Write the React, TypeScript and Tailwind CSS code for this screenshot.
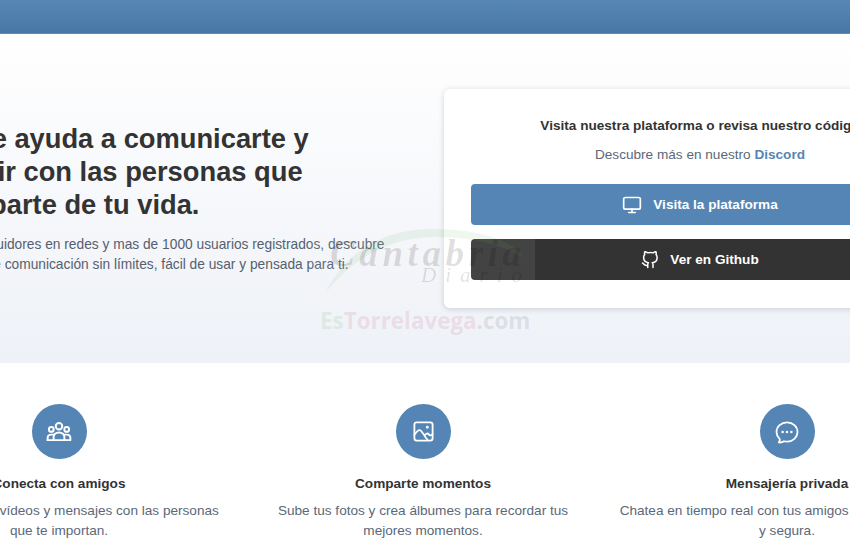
import { FiGithub, FiMonitor } from "react-icons/fi";
import { HiOutlineChatBubbleOvalLeftEllipsis } from "react-icons/hi2";

function GroupIcon({ className }: { className?: string }) {
  return (
    <svg className={className} viewBox="0 0 24 24" fill="none" stroke="currentColor" strokeWidth="1.8" strokeLinecap="round" strokeLinejoin="round">
      <circle cx="12" cy="6.6" r="3" />
      <circle cx="4.9" cy="9.6" r="2.2" />
      <circle cx="19.1" cy="9.6" r="2.2" />
      <path d="M1.5 19.5H22.5V17.6C22.5 15.6 21 14.4 19 14.4H16.4" />
      <path d="M1.5 19.5V17.6C1.5 15.6 3 14.4 5 14.4H7.6" />
      <path d="M7 19.5V17C7 14.2 9.2 12.4 12 12.4C14.8 12.4 17 14.2 17 17V19.5" />
    </svg>
  );
}

function PhotoIcon({ className }: { className?: string }) {
  return (
    <svg className={className} viewBox="0 0 24 24" fill="none" stroke="currentColor" strokeWidth="1.9" strokeLinecap="round" strokeLinejoin="round">
      <rect x="2.5" y="2.5" width="19" height="19" rx="2.5" />
      <path d="M2.5 15.5C4.5 12.5 6 10.5 8 10.5C10.5 10.5 12.5 17 16.5 21" />
      <path d="M13.5 15.5C15 14 16.5 13.5 17.5 15C18.5 16.5 20 16.5 21.5 15" />
      <circle cx="16" cy="7.5" r="0.6" />
    </svg>
  );
}

const features = [
  {
    title: "Conecta con amigos",
    text: "Comparte fotos, vídeos y mensajes con las personas que te importan.",
    icon: <GroupIcon className="h-[26px] w-[26px]" />,
  },
  {
    title: "Comparte momentos",
    text: "Sube tus fotos y crea álbumes para recordar tus mejores momentos.",
    icon: <PhotoIcon className="h-[23px] w-[23px]" />,
  },
  {
    title: "Mensajería privada",
    text: "Chatea en tiempo real con tus amigos de forma privada y segura.",
    icon: <HiOutlineChatBubbleOvalLeftEllipsis className="h-[28px] w-[28px]" />,
  },
];

// marca de agua que va encima de la página
function Watermark() {
  return (
    <div className="pointer-events-none absolute left-[310px] top-[226px] h-[110px] w-[225px]">
      <div className="absolute left-0 top-0 h-[75px] w-full bg-white/[0.08]" />
      <svg className="absolute left-0 top-0" width="225" height="80" viewBox="0 0 225 80" fill="none">
        <path d="M16 66C36 25 75 3 122 3C168 3 205 14 213 32C192 18 160 11 125 11C82 11 46 30 16 66Z" fill="#5fae5a" fillOpacity="0.1" />
      </svg>
      <div className="absolute left-[20px] top-[8px] font-['Liberation_Serif',serif] text-[37px] font-bold italic leading-[40px] tracking-[4.6px] whitespace-nowrap text-black/[0.12]">
        Cantabria
      </div>
      <div className="absolute left-[111px] top-[38px] font-['Liberation_Serif',serif] text-[21px] italic leading-[22px] tracking-[9px] whitespace-nowrap text-black/[0.12]">
        Diario
      </div>
      <div className="absolute left-[10px] top-[82px] font-['Open_Sans',sans-serif] text-[22.4px] font-bold leading-[26px] whitespace-nowrap">
        <span className="text-[#5fae5a]/15">Es</span>
        <span className="text-[#c0506a]/15">Torrelavega</span>
        <span className="text-[#555]/15">.com</span>
      </div>
    </div>
  );
}

export default function App() {
  return (
    <div className="relative h-[560px] w-[850px] overflow-hidden bg-white font-['Liberation_Sans',Arial,sans-serif]">
      <header className="h-[34px] border-b border-[#5f8db8] bg-gradient-to-b from-[#5787b5] to-[#4877a3]" />

      <section className="h-[329px] bg-gradient-to-b from-white to-[#eef1f7]">
        <div className="-ml-[110px] flex h-full w-[1066px] items-center justify-between">
          <div className="w-[500px]">
            <h1 className="text-[27.3px] font-bold leading-[33px] text-[#333]">
              Sentra te ayuda a comunicarte y compartir con las personas que forman parte de tu vida.
            </h1>
            <p className="mt-[14px] text-[13.76px] leading-[20px] text-[#55606f]">
              Con miles de seguidores en redes y mas de 1000 usuarios registrados, descubre una plataforma de comunicación sin límites, fácil de usar y pensada para ti.
            </p>
          </div>

          <div className="w-[512px] rounded-md bg-white px-[27px] pb-[28px] pt-[28px] text-center shadow-[0_1px_6px_rgba(0,0,0,0.16)]">
            <h2 className="text-[13.6px] font-bold leading-[18px] text-[#333]">
              Visita nuestra plataforma o revisa nuestro código
            </h2>
            <p className="mt-[11px] text-[13.6px] leading-[18px] text-[#5b6878]">
              Descubre más en nuestro <span className="font-bold text-[#5585b5]">Discord</span>
            </p>
            <a className="mt-[20px] flex h-[41px] items-center justify-center gap-[11px] rounded bg-[#5585b5] pt-[2px] text-[13.6px] font-bold text-white">
              <FiMonitor className="-mt-[2px] h-[20px] w-[20px]" />
              Visita la plataforma
            </a>
            <a className="mt-[14px] flex h-[41px] items-center justify-center gap-[11px] rounded bg-[#333] pt-[2px] text-[13.6px] font-bold text-white">
              <FiGithub className="-mt-[2px] h-[18px] w-[18px]" />
              Ver en Github
            </a>
          </div>
        </div>
      </section>

      <section className="-ml-[110px] grid w-[1066px] grid-cols-3 gap-[26px] pt-[41px]">
        {features.map((f) => (
          <div key={f.title} className="flex flex-col items-center text-center">
            <div className="flex h-[55px] w-[55px] items-center justify-center rounded-full bg-[#5585b5] text-white">
              {f.icon}
            </div>
            <h3 className="mt-[16px] text-[13.6px] font-bold leading-[18px] text-[#333]">{f.title}</h3>
            <p className="mt-[8px] text-[13.6px] leading-[20px] text-[#5b6878]">{f.text}</p>
          </div>
        ))}
      </section>

      <Watermark />
    </div>
  );
}
